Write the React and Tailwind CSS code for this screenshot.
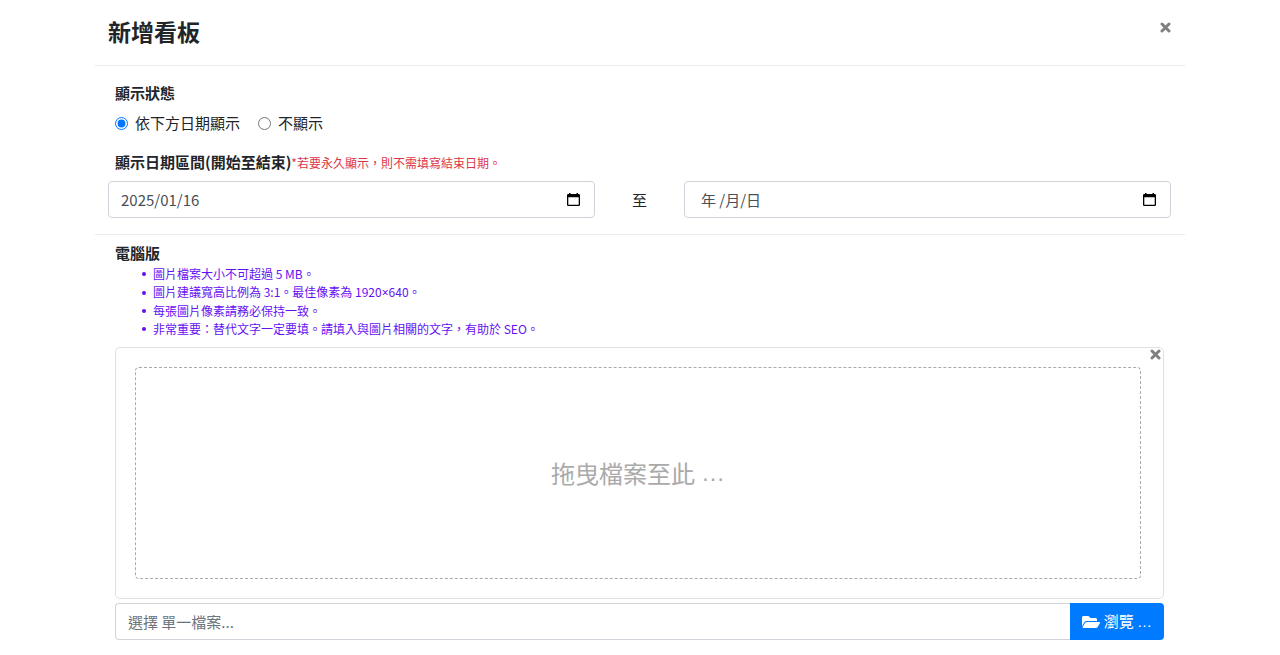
import React, { useState } from "react";

const HINTS = [
    '圖片檔案大小不可超過 5 MB。',
    <>圖片建議寬高比例為 3:1。最佳像素為 1920<span className="font-['Noto_Sans',sans-serif]">×</span>640。</>,
    '每張圖片像素請務必保持一致。',
    '非常重要：替代文字一定要填。請填入與圖片相關的文字，有助於 SEO。',
];

// CJK fonts centre the ellipsis, this one keeps it on the baseline
function Ellipsis() {
    return <span className="font-['Liberation_Sans',sans-serif]">…</span>;
}

function CloseIcon() {
    return (
        <svg className="w-[11px] h-[11px]" viewBox="0 0 11 11" fill="none" stroke="currentColor" strokeWidth="3" strokeLinecap="round">
            <path d="M2 2l7 7M9 2l-7 7" />
        </svg>
    );
}

function CalendarIcon() {
    return (
        <svg className="w-[13px] h-[13px]" viewBox="0 0 13 13">
            <path fill="#000" fillRule="evenodd" d="M2 0h1.500v1h6V0H11v1h.7q1.300 0 1.300 1.300v9.400q0 1.300-1.300 1.300H1.300Q0 13 0 11.700V2.300Q0 1 1.300 1H2zM1.300 4.300v7.400h10.400V4.300z" />
        </svg>
    );
}

function FolderOpenIcon() {
    return (
        <svg className="w-[18px] h-4" viewBox="0 0 576 512" fill="currentColor">
            <path d="M572.694 292.093L500.270 416.248A63.997 63.997 0 0 1 444.989 448H45.025c-18.523 0-30.064-20.093-20.731-36.093l72.424-124.155A64 64 0 0 1 152 256h399.964c18.523 0 30.064 20.093 20.730 36.093zM152 224h328v-48c0-26.510-21.490-48-48-48H272l-64-64H48C21.490 64 0 85.490 0 112v278.046l69.077-118.418C86.214 242.250 117.989 224 152 224z" />
        </svg>
    );
}

function DateField({ label, value, onChange, placeholder, className }) {
    return (
        <div className="relative flex-1">
            <input
                type="text"
                aria-label={label}
                value={value}
                onChange={(e) => onChange(e.target.value)}
                placeholder={placeholder}
                className={`w-full h-[37px] pr-10 border border-[#ced4da] rounded bg-white text-[#495057] placeholder:text-[#495057] outline-none focus:border-blue-300 ${className}`}
            />
            <button type="button" aria-label="選擇日期" className="absolute right-[15px] top-3">
                <CalendarIcon />
            </button>
        </div>
    );
}

function App() {
    const [status, setStatus] = useState('date');
    const [startDate, setStartDate] = useState('2025/01/16');
    const [endDate, setEndDate] = useState('');
    const [fileName, setFileName] = useState('');

    return (
        <div className="w-full max-w-[1090px] mx-auto bg-white text-[#212529] text-[15px] leading-[22px] font-['Noto_Sans_CJK_TC','Noto_Sans',sans-serif]">
            {/* Header */}
            <header className="flex items-start justify-between pl-[13px] pr-[14px] pt-[15px] pb-[17px] border-b border-[#e9ecef]">
                <h1 className="text-[23px] leading-[33px] font-bold">新增看板</h1>
                <button type="button" aria-label="關閉" className="pt-[7px] text-[#7f7f7f]">
                    <CloseIcon />
                </button>
            </header>

            {/* Display settings */}
            <section className="pl-[13px] pr-[14px] pt-4 pb-4 border-b border-[#e9ecef]">
                <fieldset className="px-[7px]">
                    <legend className="font-bold">顯示狀態</legend>
                    <div className="flex gap-[18px] pt-2">
                        <label className="flex items-center gap-[7px]">
                            <input
                                type="radio"
                                name="status"
                                checked={status === 'date'}
                                onChange={() => setStatus('date')}
                                className="w-[13px] h-[13px] accent-[#0075ff]"
                            />
                            依下方日期顯示
                        </label>
                        <label className="flex items-center gap-[7px]">
                            <input
                                type="radio"
                                name="status"
                                checked={status === 'hidden'}
                                onChange={() => setStatus('hidden')}
                                className="w-[13px] h-[13px] accent-[#0075ff]"
                            />
                            不顯示
                        </label>
                    </div>
                </fieldset>

                <p className="px-[7px] pt-[17px]">
                    <span className="font-bold">顯示日期區間(開始至結束)</span>
                    <span className="text-xs text-[#dc3545]">*若要永久顯示，則不需填寫結束日期。</span>
                </p>
                <div className="flex items-center pt-2">
                    <DateField label="開始日期" value={startDate} onChange={setStartDate} className="pl-3" />
                    <span className="w-[89px] text-center">至</span>
                    <DateField label="結束日期" value={endDate} onChange={setEndDate} placeholder="年 /月/日" className="pl-4" />
                </div>
            </section>

            {/* Desktop image upload */}
            <section className="pl-5 pr-[21px] pt-[7px] pb-4">
                <h2 className="font-bold">電腦版</h2>
                <ul className="mt-px pl-[27px] text-xs leading-[18px] text-[#6610f2]">
                    {HINTS.map((hint, index) => (
                        <li key={index} className="flex items-center gap-[7px] before:size-1 before:shrink-0 before:rounded-full before:bg-current">
                            <span>{hint}</span>
                        </li>
                    ))}
                </ul>

                <div className="relative mt-[9px] p-[19px] pr-[22px] border border-[#dee2e6] rounded-[5px]">
                    <button type="button" aria-label="移除" className="absolute right-[2px] top-px text-[#7f7f7f]">
                        <CloseIcon />
                    </button>
                    <div className="flex items-center justify-center gap-[6px] h-[212px] border border-dashed border-[#aaa] rounded text-[#aaa] text-2xl">
                        拖曳檔案至此 <Ellipsis />
                    </div>
                </div>

                <div className="flex mt-1">
                    <input
                        type="text"
                        aria-label="檔案名稱"
                        value={fileName}
                        onChange={(e) => setFileName(e.target.value)}
                        placeholder="選擇 單一檔案..."
                        className="flex-1 min-w-0 h-[37px] px-3 border border-r-0 border-[#ced4da] rounded-l text-[#495057] placeholder:text-[#6c757d] outline-none"
                    />
                    <button type="button" className="flex items-center gap-1 h-[37px] px-3 rounded-r bg-[#007bff] text-white hover:bg-[#0069d9]">
                        <FolderOpenIcon />
                        <span>瀏覽 <Ellipsis /></span>
                    </button>
                </div>
            </section>
        </div>
    );
}

export default App;
